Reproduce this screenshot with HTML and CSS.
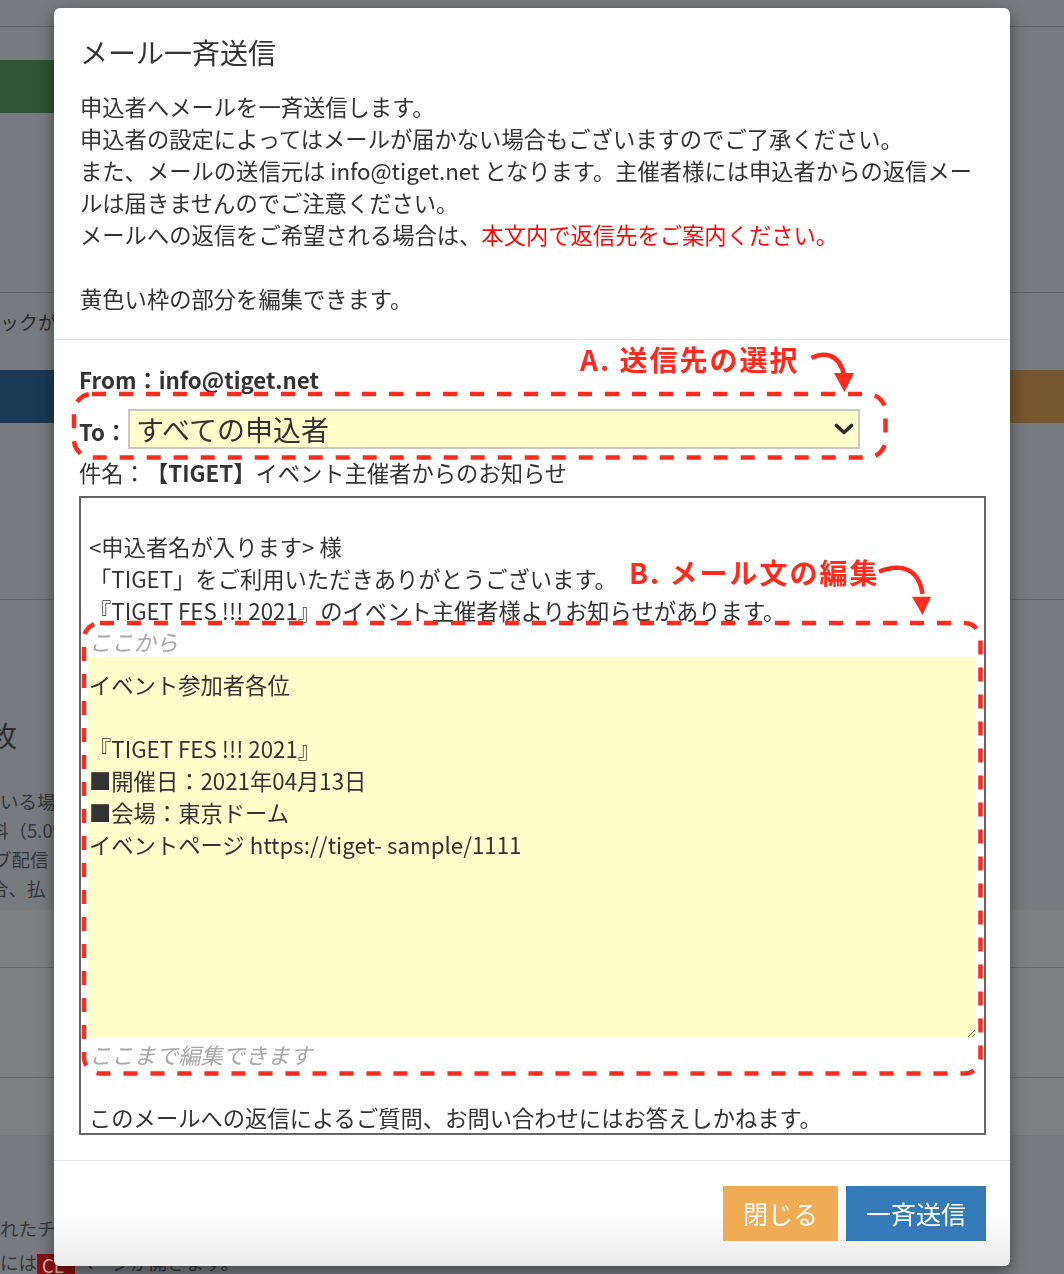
FILE: index.html
```html
<!DOCTYPE html>
<html lang="ja">
<head>
<meta charset="utf-8">
<title>メール一斉送信</title>
<link rel="stylesheet" href="styles.css">
</head>
<body>
<div class="page">
  <div class="pg-top"></div>
  <div class="pg-green"></div>
  <div class="pg-sec1"></div>
  <div class="pg-row1"><p class="pg-t1">チェックが入っている</p></div>
  <div class="pg-bars"><div class="pg-blue"></div><div class="pg-brown"></div></div>
  <div class="pg-sec2"></div>
  <div class="pg-sec3">
    <p class="pg-h">枚</p>
    <p class="pg-l pg-l1">いる場合</p>
    <p class="pg-l pg-l2">料（5.0%）</p>
    <p class="pg-l pg-l3">ブ配信</p>
    <p class="pg-l pg-l4">合、払</p>
  </div>
  <div class="pg-band"><div class="pg-b1"></div><div class="pg-b2"></div></div>
  <div class="pg-sec4">
    <p class="pg-l">れたチケット</p>
    <p class="pg-l">には<span class="pg-red">CL</span>ページが開きます。</p>
  </div>
</div>

<div class="overlay">
  <div class="modal">
    <div class="modal-header">
      <h1 class="modal-title">メール一斉送信</h1>
      <p class="modal-desc">申込者へメールを一斉送信します。<br>申込者の設定によってはメールが届かない場合もございますのでご了承ください。<br>また、メールの送信元は info@tiget.net となります。主催者様には申込者からの返信メー<br>ルは届きませんのでご注意ください。<br>メールへの返信をご希望される場合は、<span class="red">本文内で返信先をご案内ください。</span><br><br>黄色い枠の部分を編集できます。</p>
    </div>

    <div class="modal-body">
      <div class="from">From：info@tiget.net</div>
      <div class="to-box">
        <svg class="dash" aria-hidden="true"><rect width="100%" height="100%" rx="18" ry="18"/></svg>
        <span class="to-label">To：</span>
        <div class="select">
          <span class="select-text">すべての申込者</span>
          <svg class="chev" width="20" height="12" viewBox="0 0 20 12" aria-hidden="true"><polyline points="2.5,2.5 10,9.5 17.5,2.5"/></svg>
        </div>
      </div>
      <div class="subject">件名：<b>【TIGET】</b>イベント主催者からのお知らせ</div>

      <div class="mail">
        <div class="mail-head">
          <p>&lt;申込者名が入ります&gt; 様</p>
          <p>「TIGET」をご利用いただきありがとうございます。</p>
          <p>『TIGET FES !!! 2021』のイベント主催者様よりお知らせがあります。</p>
        </div>
        <div class="edit-box">
          <svg class="dash" aria-hidden="true"><rect width="100%" height="100%" rx="16" ry="16"/></svg>
          <div class="hint">ここから</div>
          <textarea class="mail-text">イベント参加者各位

『TIGET FES !!! 2021』
■開催日：2021年04月13日
■会場：東京ドーム
イベントページ https://tiget- sample/1111</textarea>
          <div class="hint">ここまで編集できます</div>
        </div>
        <p class="mail-foot">このメールへの返信によるご質問、お問い合わせにはお答えしかねます。</p>
      </div>
    </div>

    <div class="modal-footer">
      <button class="btn btn-close" type="button">閉じる</button>
      <button class="btn btn-send" type="button">一斉送信</button>
    </div>

    <div class="note note-a">A. 送信先の選択</div>
    <svg class="arrow arrow-a" width="54" height="48" viewBox="0 0 54 48" aria-hidden="true">
      <path d="M5.5 10 C16 5 33 3 38.4 28"/>
      <polygon points="28,25 48,25 38.4,44"/>
    </svg>
    <div class="note note-b">B. メール文の編集</div>
    <svg class="arrow arrow-b" width="64" height="60" viewBox="0 0 64 60" aria-hidden="true">
      <path d="M5 11.7 C22 5 44 4 48.5 34"/>
      <polygon points="38,36.7 57,36.7 48.5,55"/>
    </svg>
  </div>
</div>
</body>
</html>
```

FILE: styles.css
```css
* { box-sizing: border-box; }

html, body {
  margin: 0;
  padding: 0;
}

body {
  font-family: "Noto Sans CJK JP", "Noto Sans", sans-serif;
  color: #333;
  background: #777a7e;
  width: 1064px;
  height: 1274px;
  overflow: hidden;
  text-spacing-trim: space-all;
}

p { margin: 0; }

/* ---------- dimmed page behind the modal ---------- */
.page {
  height: 1274px;
  overflow: hidden;
  color: #2c2d2f;
  font-size: 18.5px;
}
.pg-top {
  height: 27px;
  border-bottom: 1px solid #606366;
}
.pg-green {
  margin-top: 33px;
  height: 53px;
  width: 480px;
  background: #2e5431;
}
.pg-sec1 {
  height: 180px;
  border-bottom: 1px solid #606366;
}
.pg-row1 {
  height: 77px;
  padding-top: 13px;
}
.pg-t1 {
  line-height: 32px;
  font-size: 19px;
  margin-left: -38px;
  white-space: nowrap;
}
.pg-bars {
  display: flex;
  justify-content: space-between;
  height: 53px;
}
.pg-blue { width: 520px; background: #1b3957; }
.pg-brown { width: 460px; background: #77552f; }
.pg-sec2 {
  height: 177px;
  border-bottom: 1px solid #606366;
}
.pg-sec3 {
  height: 310px;
  padding-top: 117px;
}
.pg-h {
  font-size: 28px;
  line-height: 36px;
  margin-left: -11px;
  margin-bottom: 34px;
  white-space: nowrap;
}
.pg-l {
  line-height: 29px;
  white-space: nowrap;
  color: #35363a;
}
.pg-l2 { margin-left: -10px; }
.pg-l3 { margin-left: -7px; }
.pg-l4 { margin-left: -10px; }
.pg-band {
  height: 225px;
  background: #7f8082;
}
.pg-b1 {
  height: 58px;
  border-bottom: 1px solid #66696c;
}
.pg-b2 {
  height: 110px;
  border-bottom: 1px solid #66696c;
}
.pg-sec4 {
  padding-top: 76px;
}
.pg-sec4 .pg-l {
  line-height: 34px;
}
.pg-red {
  display: inline-block;
  min-width: 38px;
  padding: 0 5px;
  background: #8b1010;
  color: #d9b0b0;
  line-height: 22px;
  vertical-align: middle;
}

/* ---------- modal ---------- */
.overlay {
  position: fixed;
  inset: 0;
}
.modal {
  position: relative;
  margin: 8px 0 0 54px;
  width: 956px;
  height: 1258px;
  background: #fff;
  border-radius: 6px;
  box-shadow: 0 5px 16px rgba(0, 0, 0, 0.45);
  overflow: hidden;
  font-size: 22.3px;
}
.modal-header {
  padding: 26px 24px 25px 26px;
  border-bottom: 1px solid #e5e5e5;
}
.modal-title {
  margin: 0;
  font-size: 28px;
  line-height: 36px;
  font-weight: 400;
  color: #333;
}
.modal-desc {
  margin-top: 20px;
  line-height: 32px;
}
.red { color: #ff0a0a; }

.modal-body {
  padding: 26px 24px 25px 25px;
}
.from {
  font-weight: 700;
  line-height: 26px;
}
.to-box {
  position: relative;
  display: flex;
  align-items: center;
  margin-left: -7px;
  width: 816px;
  height: 68px;
  padding: 17px 28px 11px 7px;
}
.to-label {
  font-weight: 700;
  padding-top: 4px;
  width: 49px;
  flex: none;
}
.select {
  flex: 1;
  height: 40px;
  display: flex;
  align-items: center;
  justify-content: space-between;
  background: #ffffcc;
  border: 2px solid #c9c9c9;
  padding: 0 4px 0 6px;
}
.select-text {
  font-size: 28px;
  line-height: 36px;
  color: #333;
}
.chev polyline {
  fill: none;
  stroke: #2b2b2b;
  stroke-width: 3.6;
  stroke-linecap: round;
  stroke-linejoin: round;
}
.subject {
  line-height: 24px;
  margin-bottom: 12px;
}
.subject b { font-weight: 700; }

.mail {
  border: 2px solid #666;
}
.mail-head {
  padding: 32px 8px 0 8px;
  line-height: 32px;
}
.edit-box {
  position: relative;
  margin: -5px 1px 0 1px;
  height: 455px;
  padding: 4px 7px 6px 6px;
}
.hint {
  line-height: 32px;
  padding-left: 1px;
  color: #a9a9a9;
  font-style: italic;
}
.mail-text {
  display: block;
  width: 100%;
  height: 381px;
  margin: 0;
  padding: 11px 4px 0 1px;
  border: none;
  outline: none;
  background: #ffffcc;
  font-family: "Noto Sans CJK JP", "Noto Sans", sans-serif;
  font-size: 22.3px;
  line-height: 32px;
  color: #333;
  resize: both;
  text-spacing-trim: space-all;
}
.mail-foot {
  margin-top: 25px;
  padding-left: 8px;
  line-height: 32px;
}

/* dashed red frames */
.dash {
  position: absolute;
  left: 2.25px;
  top: 2.25px;
  width: calc(100% - 4.5px);
  height: calc(100% - 4.5px);
  overflow: visible;
  pointer-events: none;
}
.dash rect {
  fill: none;
  stroke: #ff2b1f;
  stroke-width: 4.5;
  stroke-dasharray: 14 13;
}

.modal-footer {
  display: flex;
  justify-content: flex-end;
  gap: 8px;
  padding: 25px 24px 25px 25px;
  border-top: 1px solid #e5e5e5;
  background: linear-gradient(to bottom, #fff 50%, #ebebeb 100%);
}
.btn {
  height: 55px;
  padding: 0 20px;
  border: none;
  border-radius: 0;
  font-family: "Noto Sans CJK JP", "Noto Sans", sans-serif;
  font-size: 25px;
  line-height: 55px;
  color: #fff;
}
.btn-close { background: #efac55; }
.btn-send { background: #347ab6; }

/* annotations */
.note {
  position: absolute;
  font-size: 28px;
  line-height: 34px;
  font-weight: 700;
  letter-spacing: 2px;
  color: #ff2b1f;
  white-space: nowrap;
}
.note-a { left: 526px; top: 334px; }
.note-b { left: 575px; top: 547px; }
.arrow {
  position: absolute;
  overflow: visible;
}
.arrow path {
  fill: none;
  stroke: #ff2b1f;
  stroke-width: 4.5;
}
.arrow polygon { fill: #ff2b1f; }
.arrow-a { left: 752px; top: 340px; }
.arrow-b { left: 820px; top: 552px; }
```
